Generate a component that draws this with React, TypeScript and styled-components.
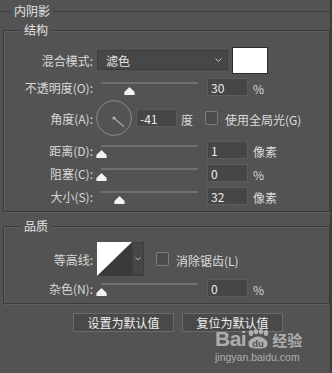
import React from 'react';
import styled, { createGlobalStyle } from 'styled-components';

const GlobalStyle = createGlobalStyle`
  html, body {
    margin: 0;
    padding: 0;
    background: #535353;
  }
  body {
    font-family: "Noto Sans CJK SC", "Noto Sans", sans-serif;
    font-size: 12px;
    color: #dcdcdc;
  }
`;

const Screen = styled.div`
  position: relative;
  width: 332px;
  height: 373px;
  box-sizing: border-box;
  overflow: hidden;
  background: #535353;
  border-right: 2px solid #3d3d3d;
`;

const Panel = styled.fieldset`
  margin: 4px 0 0 0;
  padding: 0;
  min-width: 0;
  border: 0;
  border-top: 1px solid #3c3c3c;
`;

const Legend = styled.legend<{ $indent: number }>`
  margin-left: ${({ $indent }) => $indent}px;
  padding: 0 3px;
  line-height: 14px;
  font-size: 12px;
  color: #e2e2e2;
  background: #535353;
`;

const Group = styled.fieldset<{ $top: number; $bottom: number }>`
  margin: ${({ $top }) => $top}px 0 0 3px;
  padding: 9px 0 ${({ $bottom }) => $bottom}px 0;
  min-width: 0;
  border: 1px solid #3b3b3b;
  box-shadow: inset 1px 1px 0 #5f5f5f, 1px 1px 0 #5f5f5f;
`;

const Row = styled.div<{ $h: number }>`
  display: flex;
  align-items: center;
  height: ${({ $h }) => $h}px;
`;

const Label = styled.div`
  width: 89px;
  text-align: right;
  line-height: 16px;
  padding-top: 2px;
  white-space: nowrap;
  color: #d8d8d8;
`;

const Select = styled.div`
  display: flex;
  align-items: center;
  justify-content: space-between;
  box-sizing: border-box;
  width: 131px;
  height: 20px;
  margin-left: 4px;
  padding: 0 5px 0 8px;
  background: #474747;
  border: 1px solid #3c3c3c;
  color: #e4e4e4;
`;

const Swatch = styled.div`
  box-sizing: border-box;
  width: 36px;
  height: 27px;
  margin-left: 4px;
  background: #ffffff;
  border: 1px solid #2e2e2e;
`;

const SliderBox = styled.div`
  position: relative;
  width: 101px;
  height: 18px;
  margin-left: 4px;
`;

const Track = styled.div`
  margin: 4px 0 0 4px;
  height: 2px;
  background: #707070;
`;

const Thumb = styled.svg`
  position: absolute;
  top: 9px;
  width: 11px;
  height: 8px;
`;

const NumberField = styled.input<{ $gap?: number }>`
  box-sizing: border-box;
  width: 41px;
  height: 18px;
  margin-left: ${({ $gap }) => $gap ?? 9}px;
  padding: 0 3px;
  background: #464646;
  border: 1px solid #5c5c5c;
  color: #ececec;
  font-family: "Noto Sans CJK SC", "Noto Sans", sans-serif;
  font-size: 12px;
  outline: none;
`;

const Unit = styled.span<{ $gap?: number }>`
  margin-left: ${({ $gap }) => $gap ?? 5}px;
  padding-top: 2px;
  color: #d8d8d8;
`;

const Dial = styled.svg`
  width: 36px;
  height: 36px;
  margin-left: 3px;
`;

const Checkbox = styled.span<{ $gap: number }>`
  box-sizing: border-box;
  width: 13px;
  height: 14px;
  margin-left: ${({ $gap }) => $gap}px;
  border: 1px solid #7d7d7d;
  border-radius: 2px;
  background: #4c4c4c;
`;

const CheckText = styled.span`
  margin-left: 7px;
  padding-top: 2px;
  color: #dcdcdc;
  white-space: nowrap;
`;

const Contour = styled.div`
  display: flex;
  margin-left: 4px;
  height: 34px;
`;

const ContourCurve = styled.svg`
  width: 35px;
  height: 34px;
  display: block;
`;

const ContourDrop = styled.div`
  display: flex;
  align-items: center;
  justify-content: center;
  box-sizing: border-box;
  width: 12px;
  height: 34px;
  background: #474747;
  border: 1px solid #3c3c3c;
`;

const ButtonBar = styled.div`
  display: flex;
  gap: 8px;
  margin-top: 9px;
  padding-left: 73px;
`;

const Button = styled.button`
  box-sizing: border-box;
  width: 101px;
  height: 19px;
  padding: 0;
  background: #494949;
  border: 1px solid #6a6a6a;
  color: #eeeeee;
  font-family: "Noto Sans CJK SC", "Noto Sans", sans-serif;
  font-size: 12px;
  line-height: 17px;
`;

const Watermark = styled.div`
  position: absolute;
  left: 215px;
  top: 329px;
  color: rgba(235, 235, 235, 0.6);
  pointer-events: none;
`;

const Brand = styled.div`
  display: flex;
  align-items: flex-end;
  height: 20px;
`;

const BrandLatin = styled.span`
  font-family: "Liberation Sans", Arial, sans-serif;
  font-weight: bold;
  font-size: 21px;
  line-height: 20px;
  letter-spacing: -0.5px;
`;

const BrandCjk = styled.span`
  margin-left: 2px;
  font-family: "Noto Sans CJK SC", sans-serif;
  font-weight: bold;
  font-size: 15px;
  line-height: 18px;
`;

const Domain = styled.div`
  margin-top: 3px;
  font-family: "Liberation Sans", Arial, sans-serif;
  font-size: 10.5px;
  line-height: 11px;
`;

const Chevron: React.FC<{ size?: number }> = ({ size = 7 }) => (
  <svg width={size} height={size * 0.6} viewBox="0 0 7 4">
    <path d="M0.5 0.5 L3.5 3.3 L6.5 0.5" fill="none" stroke="#c4c4c4" strokeWidth="1" />
  </svg>
);

const Slider: React.FC<{ pct: number }> = ({ pct }) => (
  <SliderBox>
    <Track />
    <Thumb style={{ left: `${4 + pct * 96 - 5.5}px` }} viewBox="0 0 11 8">
      <path d="M5.5 0.3 Q6 0.3 6.5 0.9 L10.6 5 V8 H0.4 V5 L4.5 0.9 Q5 0.3 5.5 0.3 Z" fill="#f2f2f2" />
    </Thumb>
  </SliderBox>
);

interface SliderRowProps {
  label: string;
  value: string;
  unit: string;
  pct: number;
  h: number;
}

const SliderRow: React.FC<SliderRowProps> = ({ label, value, unit, pct, h }) => (
  <Row $h={h}>
    <Label>{label}</Label>
    <Slider pct={pct} />
    <NumberField defaultValue={value} readOnly />
    <Unit>{unit}</Unit>
  </Row>
);

const angle = -41;
const rad = (-angle * Math.PI) / 180;

const App: React.FC = () => (
  <Screen>
    <GlobalStyle />
    <Panel>
      <Legend $indent={11}>内阴影</Legend>

      <Group $top={5} $bottom={1}>
        <Legend $indent={17}>结构</Legend>
        <Row $h={28}>
          <Label>混合模式:</Label>
          <Select>
            <span>滤色</span>
            <Chevron />
          </Select>
          <Swatch />
        </Row>
        <SliderRow label="不透明度(O):" value="30" unit="%" pct={0.3} h={26} />
        <Row $h={36}>
          <Label>角度(A):</Label>
          <Dial viewBox="0 0 36 36">
            <circle cx="18" cy="18" r="17.3" fill="none" stroke="#8c8c8c" strokeWidth="1" />
            <line
              x1="18"
              y1="18"
              x2={18 + 13 * Math.cos(rad)}
              y2={18 + 13 * Math.sin(rad)}
              stroke="#ababab"
              strokeWidth="1.2"
            />
            <circle cx="18" cy="18" r="1.6" fill="#b0b0b0" />
          </Dial>
          <NumberField defaultValue={String(angle)} readOnly $gap={4} />
          <Unit $gap={4}>度</Unit>
          <Checkbox $gap={12} />
          <CheckText>使用全局光(G)</CheckText>
        </Row>
        <SliderRow label="距离(D):" value="1" unit="像素" pct={0} h={28} />
        <SliderRow label="阻塞(C):" value="0" unit="%" pct={0} h={18} />
        <SliderRow label="大小(S):" value="32" unit="像素" pct={0.19} h={28} />
      </Group>

      <Group $top={7} $bottom={3}>
        <Legend $indent={17}>品质</Legend>
        <Row $h={34}>
          <Label>等高线:</Label>
          <Contour>
            <ContourCurve viewBox="0 0 35 34">
              <rect x="0" y="0" width="35" height="34" fill="#3a3a3a" />
              <polygon points="0,0 35,0 0,34" fill="#ffffff" />
            </ContourCurve>
            <ContourDrop>
              <Chevron size={6} />
            </ContourDrop>
          </Contour>
          <Checkbox $gap={12} />
          <CheckText>消除锯齿(L)</CheckText>
        </Row>
        <SliderRow label="杂色(N):" value="0" unit="%" pct={0} h={24} />
      </Group>
    </Panel>

    <ButtonBar>
      <Button type="button">设置为默认值</Button>
      <Button type="button">复位为默认值</Button>
    </ButtonBar>

    <Watermark>
      <Brand>
        <BrandLatin>Bai</BrandLatin>
        <svg width="24" height="20" viewBox="0 0 24 20">
          <ellipse cx="5" cy="4" rx="2.3" ry="3" fill="currentColor" />
          <ellipse cx="10" cy="2.6" rx="2.3" ry="2.6" fill="currentColor" />
          <ellipse cx="15" cy="2.6" rx="2.3" ry="2.6" fill="currentColor" />
          <ellipse cx="20" cy="4" rx="2.3" ry="3" fill="currentColor" />
          <path d="M3 12 Q12 3 21 12 Q24 20 12 19.5 Q0 20 3 12 Z" fill="currentColor" />
          <text x="12" y="17.5" textAnchor="middle" fontFamily="Liberation Sans, Arial, sans-serif" fontWeight="bold" fontSize="9.5" fill="#535353">
            du
          </text>
        </svg>
        <BrandCjk>经验</BrandCjk>
      </Brand>
      <Domain>jingyan.baidu.com</Domain>
    </Watermark>
  </Screen>
);

export default App;
